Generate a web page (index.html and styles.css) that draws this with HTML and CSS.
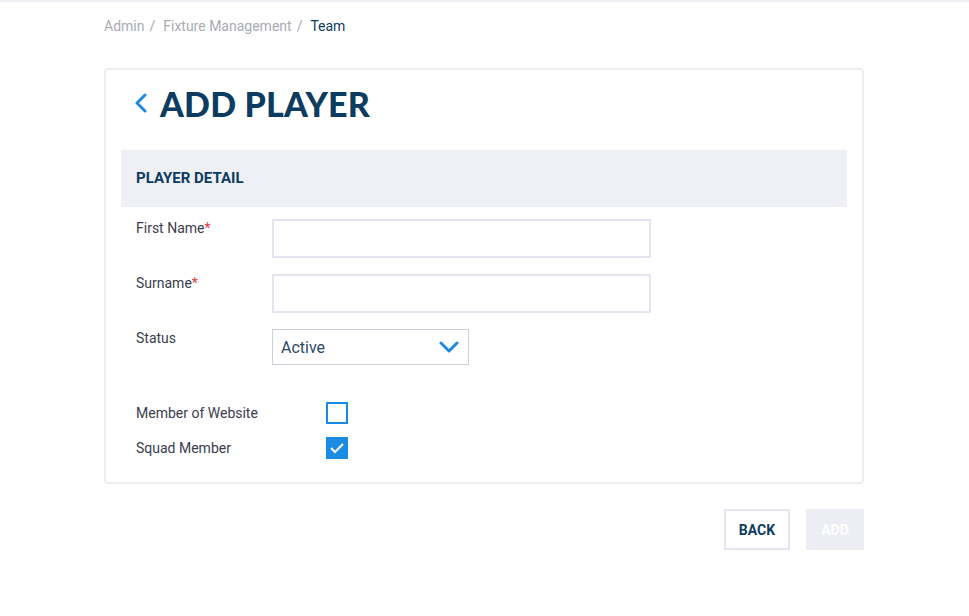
FILE: index.html
```html
<!DOCTYPE html>
<html lang="en">
<head>
    <meta charset="UTF-8">
    <title>Add Player</title>
    <link rel="stylesheet" href="styles.css">
</head>
<body>
    <div class="top-line"></div>
    <div class="page">
        <div class="breadcrumb">
            <span class="crumb">Admin</span><span class="sep">/</span><span class="crumb">Fixture Management</span><span class="sep">/</span><span class="crumb current">Team</span>
        </div>

        <div class="card">
            <div class="title-row">
                <svg class="back-icon" width="14" height="20" viewBox="0 0 14 20">
                    <polyline points="11,2 3,10 11,18" fill="none" stroke="#1e88e5" stroke-width="3" stroke-linecap="round" stroke-linejoin="round"/>
                </svg>
                <h1>ADD PLAYER</h1>
            </div>

            <div class="section-head">PLAYER DETAIL</div>

            <div class="form">
                <div class="row">
                    <label class="label">First Name<span class="req">*</span></label>
                    <input class="text-input" type="text">
                </div>
                <div class="row">
                    <label class="label">Surname<span class="req">*</span></label>
                    <input class="text-input" type="text">
                </div>
                <div class="row">
                    <label class="label">Status</label>
                    <div class="select">
                        <span>Active</span>
                        <svg width="20" height="12" viewBox="0 0 20 12">
                            <polyline points="2,2 10,10 18,2" fill="none" stroke="#1e88e5" stroke-width="3" stroke-linecap="round" stroke-linejoin="round"/>
                        </svg>
                    </div>
                </div>

                <div class="checks">
                    <div class="check-row">
                        <span class="check-label">Member of Website</span>
                        <span class="box"></span>
                    </div>
                    <div class="check-row">
                        <span class="check-label">Squad Member</span>
                        <span class="box checked">
                            <svg width="16" height="14" viewBox="0 0 16 14">
                                <polyline points="2,7 6,11 14,3" fill="none" stroke="#fff" stroke-width="2"/>
                            </svg>
                        </span>
                    </div>
                </div>
            </div>
        </div>

        <div class="actions">
            <button class="btn btn-back">BACK</button>
            <button class="btn btn-add">ADD</button>
        </div>
    </div>
</body>
</html>
```

FILE: styles.css
```css
* {
    box-sizing: border-box;
}

body {
    margin: 0;
    background: #fff;
    font-family: Roboto, "Liberation Sans", sans-serif;
    color: #3a3d4d;
}

.top-line {
    height: 2px;
    background: #eef0f5;
}

.page {
    width: 760px;
    margin-left: 104px;
}

.breadcrumb {
    padding-top: 15px;
    height: 66px;
    font-size: 14px;
    line-height: 18px;
    color: #a9abb3;
}

.sep {
    margin: 0 8px 0 5px;
}

.crumb.current {
    margin-left: 0;
    color: #0d3c61;
}

.card {
    border: 2px solid #eceef4;
    border-radius: 4px;
    padding: 11px 15px 23px;
}

.title-row {
    display: flex;
    align-items: center;
    height: 42px;
    margin-top: 1px;
    padding-left: 13px;
}

.back-icon {
    margin-right: 12px;
}

h1 {
    margin: 0;
    font-family: Lato, "Open Sans", sans-serif;
    font-weight: 900;
    font-size: 34px;
    color: #0d3c61;
    letter-spacing: 0.2px;
}

.section-head {
    margin-top: 26px;
    height: 57px;
    line-height: 57px;
    padding-left: 15px;
    background: #eff0f5;
    font-size: 15px;
    font-weight: bold;
    color: #0d3c61;
}

.form {
    padding: 12px 15px 0;
}

.row {
    display: flex;
    align-items: flex-start;
    margin-bottom: 16px;
}

.label {
    width: 136px;
    font-size: 14px;
    line-height: 18px;
}

.req {
    color: #e53935;
}

.text-input {
    width: 379px;
    height: 39px;
    border: 2px solid #e3e6f0;
    border-radius: 0;
    outline: none;
}

.select {
    width: 197px;
    height: 36px;
    border: 1px solid #cdd1db;
    display: flex;
    align-items: center;
    justify-content: space-between;
    padding: 0 9px 0 8px;
    font-size: 16px;
    color: #2c4867;
}

.checks {
    padding-top: 21px;
}

.check-row {
    display: flex;
    align-items: center;
    height: 22px;
    margin-bottom: 13px;
}

.check-row:last-child {
    margin-bottom: 0;
}

.check-label {
    width: 190px;
    font-size: 14px;
}

.box {
    width: 22px;
    height: 22px;
    border: 2px solid #1a8ce6;
    display: flex;
    align-items: center;
    justify-content: center;
}

.box.checked {
    background: #1a8ce6;
}

.actions {
    display: flex;
    justify-content: flex-end;
    gap: 16px;
    margin-top: 25px;
}

.btn {
    height: 41px;
    font-family: Roboto, "Liberation Sans", sans-serif;
    font-size: 14px;
    font-weight: bold;
    cursor: pointer;
}

.btn-back {
    width: 66px;
    background: #fff;
    border: 2px solid #e3e6f0;
    color: #0d3c61;
}

.btn-add {
    width: 58px;
    background: #eceef4;
    border: none;
    color: #fff;
}
```
